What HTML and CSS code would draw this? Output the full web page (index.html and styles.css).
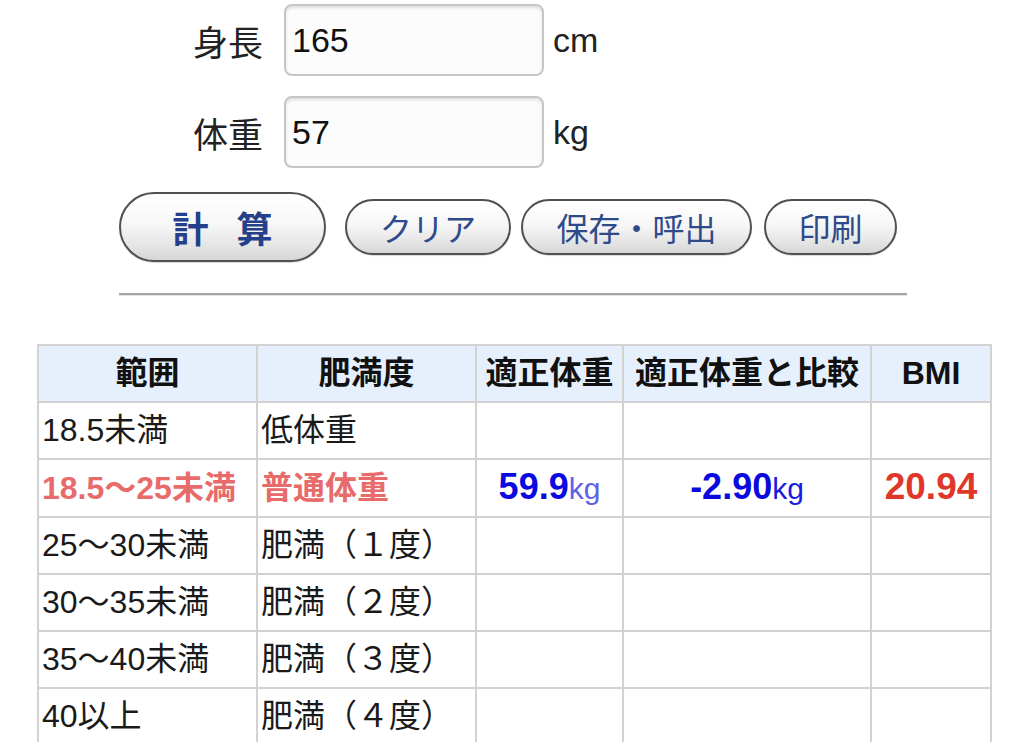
FILE: index.html
```html
<!DOCTYPE html>
<html lang="ja">
<head>
<meta charset="utf-8">
<title>BMI計算</title>
<link rel="stylesheet" href="styles.css">
</head>
<body>
<div class="form">
  <div class="row">
    <label class="label">身長</label>
    <input class="field" type="text" value="165">
    <span class="unit">cm</span>
  </div>
  <div class="row row2">
    <label class="label">体重</label>
    <input class="field" type="text" value="57">
    <span class="unit">kg</span>
  </div>
</div>
<div class="buttons">
  <button class="btn btn-main">計算</button>
  <button class="btn btn-clear">クリア</button>
  <button class="btn btn-save">保存・呼出</button>
  <button class="btn btn-print">印刷</button>
</div>
<div class="rule"></div>
<table class="result">
  <colgroup>
    <col class="c1"><col class="c2"><col class="c3"><col class="c4"><col class="c5">
  </colgroup>
  <thead>
    <tr><th>範囲</th><th>肥満度</th><th>適正体重</th><th>適正体重と比較</th><th>BMI</th></tr>
  </thead>
  <tbody>
    <tr><td>18.5未満</td><td>低体重</td><td></td><td></td><td></td></tr>
    <tr class="hit"><td class="hl">18.5〜25未満</td><td class="hl">普通体重</td><td class="num"><b class="blue">59.9</b><span class="kg1">kg</span></td><td class="num"><b class="blue">-2.90</b><span class="kg2">kg</span></td><td class="num"><b class="red">20.94</b></td></tr>
    <tr><td>25〜30未満</td><td>肥満（１度）</td><td></td><td></td><td></td></tr>
    <tr><td>30〜35未満</td><td>肥満（２度）</td><td></td><td></td><td></td></tr>
    <tr><td>35〜40未満</td><td>肥満（３度）</td><td></td><td></td><td></td></tr>
    <tr><td>40以上</td><td>肥満（４度）</td><td></td><td></td><td></td></tr>
  </tbody>
</table>
</body>
</html>
```
FILE: styles.css
```css
html, body {
  margin: 0;
  padding: 0;
  background: #ffffff;
}
body {
  font-family: "Liberation Sans", "Noto Sans CJK JP", sans-serif;
  color: #111;
}
.form {
  padding-top: 4px;
}
.row {
  display: flex;
  align-items: center;
  margin-left: 193px;
}
.row2 {
  margin-top: 20px;
}
.label {
  width: 70px;
  margin-right: 21px;
  font-size: 35px;
  font-family: "Noto Sans CJK JP", sans-serif;
  color: #222;
}
.field {
  box-sizing: border-box;
  width: 260px;
  height: 72px;
  margin: 0;
  border: 2px solid #c6c6c6;
  border-radius: 8px;
  padding: 0 6px;
  background: #fcfcfc;
  box-shadow: inset 0 2px 3px rgba(0,0,0,0.12);
  font-family: "Liberation Sans", sans-serif;
  font-size: 34px;
  color: #111;
  outline: none;
}
.unit {
  margin-left: 9px;
  font-size: 34px;
  color: #222;
}
.buttons {
  display: flex;
  align-items: center;
  margin-top: 24px;
  margin-left: 119px;
}
.btn {
  box-sizing: border-box;
  height: 56px;
  margin: 0 10px 0 0;
  padding: 0;
  border: 2px solid #505050;
  border-radius: 999px;
  background: linear-gradient(#ffffff 0%, #f7f7f7 45%, #e4e4e4 80%, #d6d6d6 100%);
  box-shadow: 0 1px 1px rgba(0,0,0,0.15);
  font-family: "Noto Sans CJK JP", sans-serif;
  font-size: 32px;
  color: #2e4a8a;
  line-height: 1;
}
.btn-main {
  width: 207px;
  height: 70px;
  margin-right: 19px;
  font-size: 36px;
  font-weight: bold;
  letter-spacing: 28px;
  padding-left: 28px;
  color: #24408a;
}
.btn-clear { width: 166px; }
.btn-save { width: 231px; margin-right: 12px; }
.btn-print { width: 133px; }
.rule {
  width: 788px;
  height: 2px;
  margin: 31px 0 0 119px;
  background: #a4a4a4;
  border-bottom: 1px solid #e2e2e2;
}
.result {
  margin: 48px 0 0 37px;
  border-collapse: collapse;
  table-layout: fixed;
  width: 953px;
}
.c1 { width: 219px; }
.c2 { width: 219px; }
.c3 { width: 147px; }
.c4 { width: 248px; }
.c5 { width: 120px; }
.result th, .result td {
  border: 2px solid #d2d2d2;
  padding: 8px 3px;
  line-height: 39px;
  font-size: 32px;
  white-space: nowrap;
  overflow: hidden;
}
.result th {
  background: #e6f0fc;
  font-weight: bold;
  text-align: center;
  color: #111;
}
.result td {
  text-align: left;
  color: #1a1a1a;
}
.result td.hl {
  color: #e86b6b;
  font-weight: bold;
}
.result td.num {
  text-align: center;
  padding-left: 0;
  padding-right: 0;
}
.blue, .red, .kg1, .kg2 {
  line-height: 1;
}
.blue {
  color: #0a0ae0;
  font-size: 36px;
}
.red {
  color: #e0372b;
  font-size: 37px;
}
.kg1 {
  color: #6060e8;
  font-size: 30px;
}
.kg2 {
  color: #1a1ae0;
  font-size: 30px;
}
```
